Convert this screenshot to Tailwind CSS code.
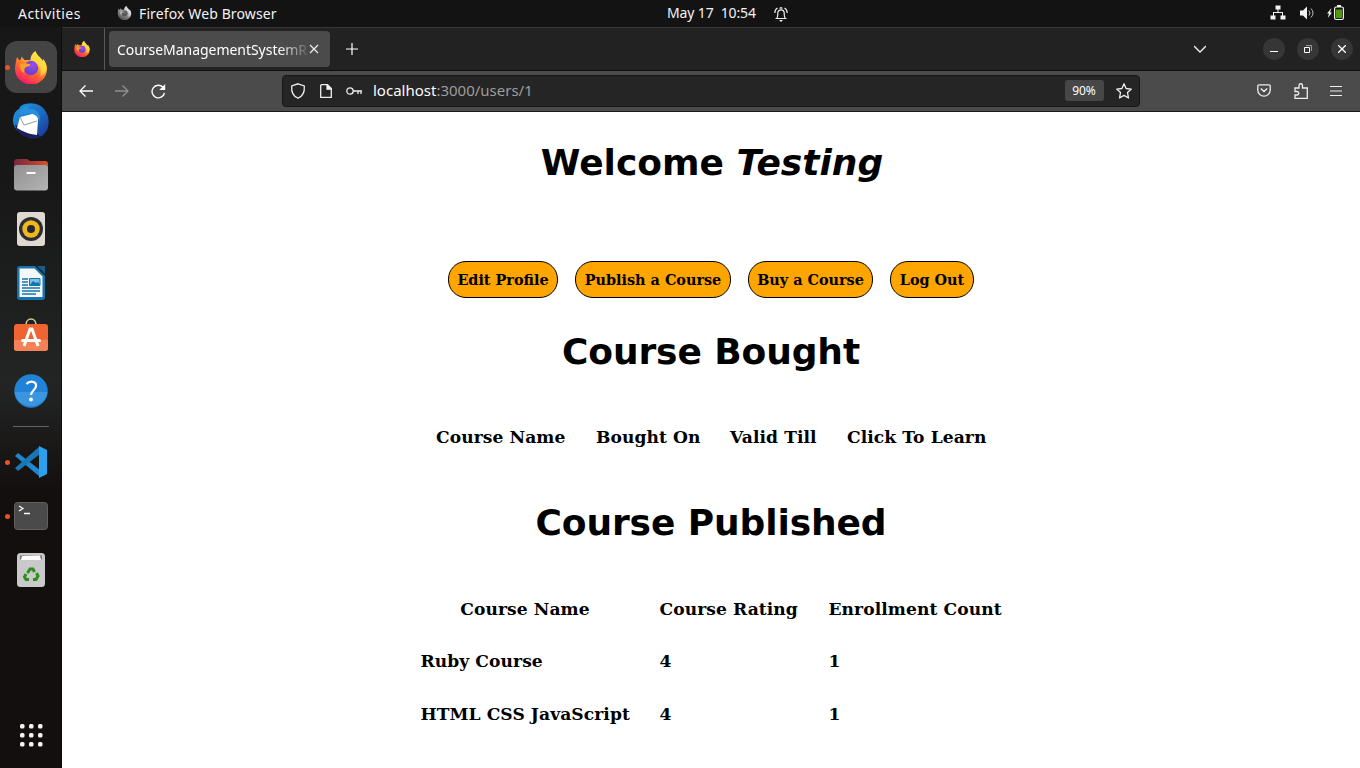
<!DOCTYPE html>
<html lang="en">
<head>
<meta charset="utf-8">
<title>CourseManagementSystem</title>
<script src="https://cdn.jsdelivr.net/npm/@tailwindcss/browser@4"></script>
</head>
<body class="w-[1360px] h-[768px] overflow-hidden bg-[#131313] text-white font-['Noto_Sans','Open_Sans',sans-serif] flex flex-col">
<svg class="absolute w-0 h-0">
  <defs>
    <linearGradient id="ff" x1="0.85" y1="0.05" x2="0.3" y2="1"><stop offset="0" stop-color="#fff44f"/><stop offset=".3" stop-color="#ffc02a"/><stop offset=".6" stop-color="#ff6a30"/><stop offset=".85" stop-color="#ff3550"/><stop offset="1" stop-color="#e8127c"/></linearGradient>
    <linearGradient id="tb" x1="0" y1="0" x2="1" y2="1"><stop offset="0" stop-color="#1f9ae0"/><stop offset=".5" stop-color="#1d6fc4"/><stop offset="1" stop-color="#1b2f8f"/></linearGradient>
    <linearGradient id="gray" x1="0" y1="0" x2="1" y2="1"><stop offset="0" stop-color="#919191"/><stop offset="1" stop-color="#b4b4b4"/></linearGradient>
    <linearGradient id="fold" x1="0" y1="0" x2="1" y2="0"><stop offset="0" stop-color="#77243f"/><stop offset="1" stop-color="#d9512b"/></linearGradient>
    <radialGradient id="pur" cx=".6" cy=".3" r=".8"><stop offset="0" stop-color="#9b4bea"/><stop offset="1" stop-color="#5a3fc8"/></radialGradient>
    <symbol id="fox" viewBox="0 0 32 33">
      <path fill="url(#ff)" d="M2 6 4.500 9.500 6 8l.5-2.500L9.500 9h6c0-4 2-7 5-9 .8 3 2.500 4.500 5 7 1 1 1.500 2 2 3.500l.5-2.500c2.500 3 4 6 4 10a16 15.500 0 0 1-32 0c0-4 1-8 2-12z"/>
      <path fill="#ffe14a" d="M20.500 0c.8 3 2.500 4.500 5 7 1 1 1.500 2 2 3.500l.5-2.500c2.500 3 4 6 3.500 10-1 4-3 6-6 7.500 1-5-.5-11-4.500-13.500-3-1-5-2-5.500-3 0-4 2-7 5-9z" opacity=".7"/>
      <circle cx="16" cy="17" r="7.200" fill="url(#pur)"/>
      <path fill="#ff9d2a" d="M4.500 14c2-2 5-2.500 11-.5-.5 2-3 2-4.500 2.500-2 1.500-2 4-1.500 6.500-3-1.500-5-5-5-8.500z"/>
    </symbol>
  </defs>
</svg>

<header class="h-[27px] w-full shrink-0 flex items-center text-[14px] leading-[26px] text-[#f2f2f2]">
  <div class="w-[117px] pl-[18px]"><span class="tracking-[0.450px]">Activities</span></div>
  <svg class="w-[15px] h-[14px] grayscale mt-[-2px]"><use href="#fox"/></svg>
  <span class="ml-[7px] w-[528px] tracking-[0.120px]">Firefox Web Browser</span>
  <span class="w-[106px] whitespace-pre tracking-[-0.120px] mt-[-2px]">May 17  10:54</span>
  <svg class="w-4 h-4" viewBox="0 0 16 16" fill="none" stroke="#eee" stroke-width="1.200"><path d="M2.500 12.500h11M4 12c.8-1.500.8-3 .8-5a3.200 3.200 0 0 1 6.400 0c0 2 0 3.500.8 5M7 2.700a1 1 0 0 1 2 0M1.800 7q0-3.500 2.700-5M14.200 7q0-3.500-2.700-5"/><path d="M6 14h4l-2 2z" fill="#eee" stroke="none"/></svg>
  <div class="flex-1"></div>
  <svg class="w-4 h-4 mt-[-1px]" viewBox="0 0 16 16" fill="#f2f2f2"><path d="M5.500.5h5v4h-5zM.5 10.500h5v4h-5zM10.500 10.500h5v4h-5zM7.500 4h1v3H13v4h-1V8H4v3H3V7h4.500z"/></svg>
  <svg class="w-4 h-4 ml-[13px] mt-[-2px]" viewBox="0 0 16 16"><path fill="#f2f2f2" d="M1 5.500h3l4-4v13l-4-4H1z"/><path fill="none" stroke="#bbb" d="M10 5.500q2 2.500 0 5M12 3.500q4 4.500 0 9"/></svg>
  <svg class="w-[17px] h-[17px] ml-3 mr-[16px] mt-[-2px]" viewBox="0 0 17 17"><path fill="#f2f2f2" d="M4.500 4 0 9.500h2L.8 14 5 8.500H3z"/><rect x="7.600" y="3" width="8.800" height="12.500" rx="1.500" fill="none" stroke="#f2f2f2" stroke-width="1.200"/><path fill="#f2f2f2" d="M10 1h4v2h-4z"/><path fill="#4e9a06" d="M9 5.500h6V14H9z"/></svg>
</header>

<div class="flex flex-1 min-h-0">
  <aside class="w-[62px] shrink-0 flex flex-col items-center bg-linear-to-b from-[#161716] from-[20%] via-[#232525] via-[48%] to-[#130f0e] to-[63%] border-r border-[#0c0c0c]">
    <div class="h-[54px] mt-[13px] w-full flex items-center">
      <i class="w-[5px] h-[5px] rounded-full bg-[#e95420] ml-[5px] mr-[-5px] z-10"></i>
      <div class="w-[52px] h-[52px] rounded-[12px] bg-[#434443] flex items-center justify-center"><svg class="w-8 h-[33px]"><use href="#fox"/></svg></div>
    </div>
    <div class="h-[54px] flex items-center"><svg class="w-9 h-9" viewBox="0 0 36 36"><path fill="url(#tb)" d="M12 1C20-1 27 1 31 6c5 6 6 14 3 21-3 6-9 9-16 8C9 33 0 26 0 18 0 12 2 8 6 6c1-3 3-4 6-5z"/><path fill="#1b1f5c" d="M2 22c2 8 8 12 18 13l8-1-5-5z"/><path fill="#fff" d="m7 14 12-3c4 0 6 2 6 6l-1 15C15 31 9 28 4 25z"/><path fill="none" stroke="#999" d="m7 14 4 8 13-4"/><path fill="#2b8fe0" d="M6 12c1-6 6-10 12-10-3 1-4 3-3 4 9-1 13 5 12 13C26 14 20 9 14 11z"/></svg></div>
    <div class="h-[54px] flex items-center"><svg class="w-[34px] h-8" viewBox="0 0 34 32"><path fill="url(#fold)" d="M0 3a3 3 0 0 1 3-3h10l3 2h15a3 3 0 0 1 3 3v8H0z"/><rect y="6" width="34" height="25.500" rx="3" fill="url(#gray)"/><path stroke="#fff" stroke-width="2" d="M12.500 14h9"/></svg></div>
    <div class="h-[54px] flex items-center"><svg class="w-7 h-[34px]" viewBox="0 0 28 34"><rect width="28" height="34" rx="3" fill="#dfdad1"/><circle cx="14" cy="17" r="12" fill="#2b2d33"/><circle cx="14" cy="17" r="8.700" fill="#eeb91b"/><circle cx="14" cy="17" r="4" fill="#26262c"/></svg></div>
    <div class="h-[54px] flex items-center"><svg class="w-7 h-[34px]" viewBox="0 0 28 34"><path fill="#1872ac" d="M3 0h15l10 10v21a3 3 0 0 1-3 3H3a3 3 0 0 1-3-3V3a3 3 0 0 1 3-3z"/><path fill="#f5f8fa" d="M2.500 2.500h15l8 8V31h-23z"/><path fill="#155c8f" d="M20 0h8v8z"/><path stroke="#1872ac" stroke-width="1.500" d="M5 13h6M5 16h6M5 19h6M5 22h18M5 25h18M5 28h14"/><path fill="#76c1e8" stroke="#1872ac" d="M12.500 12.500H23v7H12.500z"/><path fill="#1872ac" d="m13 19 3-4 3 2 2-1 2 3z"/></svg></div>
    <div class="h-[54px] flex items-center"><svg class="w-[34px] h-[34px] mt-[-4px]" viewBox="0 0 34 34"><path d="M12 7c0-8 10-8 10 0" fill="none" stroke="#d7c89c" stroke-width="1.600"/><rect y="6" width="34" height="27" rx="3" fill="#ef6430"/><path fill="#f58158" d="M0 22h34v8a3 3 0 0 1-3 3H3a3 3 0 0 1-3-3z"/><path fill="none" stroke="#fff" stroke-width="3" d="M10 28 16 11h2l6 17"/><path stroke="#fff" stroke-width="3" stroke-linecap="round" d="M8.500 22.500h17"/></svg></div>
    <div class="h-[54px] flex items-center"><svg class="w-[34px] h-[34px]" viewBox="0 0 34 34"><circle cx="17" cy="17" r="16.700" fill="#2183d8"/><path fill="#3b96e2" d="M.5 18h33a16.700 16.700 0 0 1-33 0z"/><path d="M12.500 10c3-3.500 10-3 9.500 2 0 4-5 4.500-5 9" fill="none" stroke="#fff" stroke-width="2.200"/><circle cx="17" cy="25.500" r="1.900" fill="#fff"/></svg></div>
    <div class="w-9 h-px bg-[#626463] mt-[8px] mb-[8px]"></div>
    <div class="h-[54px] w-full flex items-center">
      <i class="w-[5px] h-[5px] rounded-full bg-[#e95420] ml-[5px] mr-[5px]"></i>
      <svg class="w-8 h-8" viewBox="0 0 32 32"><path fill="#1f86cf" d="M0 10 3 7l22 17v7z"/><path fill="#1977b8" d="M0 22 3 25 25 8V0z"/><path fill="#2ba1ee" d="m24 0 8 4v24l-8 4z"/></svg>
    </div>
    <div class="h-[54px] w-full flex items-center">
      <i class="w-[5px] h-[5px] rounded-full bg-[#e95420] ml-[5px] mr-[4px]"></i>
      <svg class="w-[34px] h-7" viewBox="0 0 34 28"><rect x=".5" y=".5" width="33" height="27" rx="3" fill="#4a4a4a" stroke="#616161"/><path fill="none" stroke="#fff" stroke-width="1.300" d="m5 4 4 2.500L5 9M10 11.500h6"/></svg>
    </div>
    <div class="h-[54px] flex items-center"><svg class="w-7 h-[34px]" viewBox="0 0 28 34"><rect width="28" height="34" rx="3.500" fill="#c9c9c9"/><path fill="#777" d="M3 2.500h22v4H3z"/><path fill="#fff" d="m5 3 18-.5 1 4.500H4z"/><g fill="none" stroke="#2c8f1b" stroke-width="3"><path d="m10.500 20 2.500-4h3l1.500 3M19.500 20l1.500 3-2 3.500h-3M12 26.500H9L7.500 24l1.500-3"/></g></svg></div>
    <div class="flex-1"></div>
    <svg class="w-6 h-6 mb-[21px]" viewBox="0 0 24 24" fill="#f5f3f1"><rect x="1" y="1" width="4.500" height="4.500" rx="1.500"/><rect x="10" y="1" width="4.500" height="4.500" rx="1.500"/><rect x="19" y="1" width="4.500" height="4.500" rx="1.500"/><rect x="1" y="10" width="4.500" height="4.500" rx="1.500"/><rect x="10" y="10" width="4.500" height="4.500" rx="1.500"/><rect x="19" y="10" width="4.500" height="4.500" rx="1.500"/><rect x="1" y="19" width="4.500" height="4.500" rx="1.500"/><rect x="10" y="19" width="4.500" height="4.500" rx="1.500"/><rect x="19" y="19" width="4.500" height="4.500" rx="1.500"/></svg>
  </aside>

  <main class="flex-1 min-w-0 flex flex-col bg-white">
    <div class="h-[44px] shrink-0 bg-[#222222] border-t border-[#383838] border-b border-b-[#101010] flex items-center">
      <div class="w-[43px] h-full border-r border-[#5a5a5a] flex items-center pl-[12px]"><svg class="w-4 h-4"><use href="#fox"/></svg></div>
      <div class="ml-[4px] w-[221px] h-[36px] rounded-[4px] bg-[#4b4b4b] flex items-center pl-2">
        <span class="w-[190px] whitespace-nowrap text-[14px] tracking-[-0.040px] mask-r-from-85% mask-r-to-102%">CourseManagementSystemR</span>
        <svg class="w-[10px] h-[10px] ml-[2px]" viewBox="0 0 10 10" stroke="#eee" stroke-width="1.200"><path d="m1 1 8 8M9 1 1 9"/></svg>
      </div>
      <svg class="w-3 h-3 ml-[16px]" viewBox="0 0 12 12" fill="#fff"><path d="M5.400 0h1.200v5.400H12v1.200H6.600V12H5.400V6.600H0V5.400h5.400z"/></svg>
      <div class="flex-1"></div>
      <svg class="w-3 h-2 mr-[57px]" viewBox="0 0 12 8" fill="none" stroke="#eee" stroke-width="1.400"><path d="m0 1 6 6 6-6"/></svg>
      <div class="flex gap-3 mr-[7px]">
        <div class="w-[22px] h-[22px] rounded-full bg-[#363636] flex items-center justify-center"><svg class="w-2 h-2" viewBox="0 0 8 8"><path d="M0 6h8v1H0z" fill="#fff"/></svg></div>
        <div class="w-[22px] h-[22px] rounded-full bg-[#363636] flex items-center justify-center"><svg class="w-2 h-2" viewBox="0 0 8 8" fill="none"><path d="M.5 2.500h5v5h-5z" stroke="#fff"/><path d="M2 .5h5.500V6" stroke="#999"/></svg></div>
        <div class="w-[22px] h-[22px] rounded-full bg-[#363636] flex items-center justify-center"><svg class="w-2 h-2" viewBox="0 0 8 8" stroke="#fff" stroke-width="1.300"><path d="m0 0 8 8M8 0 0 8"/></svg></div>
      </div>
    </div>
    <div class="h-[41px] shrink-0 bg-[#4b4b4b] border-b border-[#191919] flex items-center">
      <svg class="w-[14px] h-3 ml-[17px]" viewBox="0 0 14 12" fill="none" stroke="#fff" stroke-width="1.300"><path d="M14 6H1M6.500.5 1 6l5.500 5.500"/></svg>
      <svg class="w-[14px] h-3 ml-[22px]" viewBox="0 0 14 12" fill="none" stroke="#909090" stroke-width="1.300"><path d="M0 6h13M7.500.5 13 6l-5.500 5.500"/></svg>
      <svg class="w-[15px] h-[15px] ml-[22px]" viewBox="0 0 15 15" fill="none" stroke="#fff" stroke-width="1.400"><path d="M13.500 9A6.300 6.300 0 1 1 12 3.300L13.500 5"/><path d="M14.200 0v6h-6z" fill="#fff" stroke="none"/></svg>
      <div class="ml-[116px] mt-[-1px] w-[858px] h-[32px] rounded-[4px] bg-[#252525] border border-[#171717] flex items-center">
        <svg class="w-4 h-4 ml-[7px]" viewBox="0 0 16 16" fill="none" stroke="#eee" stroke-width="1.300"><path d="M8 .8 14.300 3c.5 6-2 10.500-6.300 12.200C3.700 13.500 1.200 9 1.700 3z"/></svg>
        <svg class="w-3 h-[14px] ml-[14px]" viewBox="0 0 12 14" fill="none" stroke="#eee" stroke-width="1.300"><path d="M1.500.7h6l3.800 3.800v8.800H.7V1.500z"/><path d="M7 .7v4.500h4.500z" fill="#eee"/></svg>
        <svg class="w-4 h-2 ml-[14px]" viewBox="0 0 16 8" fill="none" stroke="#eee" stroke-width="1.300"><circle cx="4" cy="4" r="3.200"/><path d="M7 4h9M12 4v3M15 4v3"/></svg>
        <span class="ml-[11px] text-[15px] tracking-[0px] text-[#9d9d9d]"><span class="text-[#fbfbfb]">localhost</span>:3000/users/1</span>
        <div class="flex-1"></div>
        <span class="w-[39px] h-[21px] rounded-[3px] bg-[#474747] text-[12px] leading-[21px] text-center tracking-[-0.1px] pr-px">90%</span>
        <svg class="w-4 h-4 ml-[12px] mr-[7px]" viewBox="0 0 16 16" fill="none" stroke="#eee" stroke-width="1.300" stroke-linejoin="round"><path d="m8 .8 2.100 4.700 5.200.6-3.800 3.500 1 5.400L8 12.400 3.500 15l1-5.400L.7 6.100l5.200-.6z"/></svg>
      </div>
      <div class="flex-1"></div>
      <svg class="w-[14px] h-[13px] mt-[-1px]" viewBox="0 0 14 13" fill="none" stroke="#eee" stroke-width="1.300"><path d="M2 .8h10a1.200 1.200 0 0 1 1.200 1.200v4a6.200 6.200 0 0 1-12.400 0V2A1.200 1.200 0 0 1 2 .8zM3.800 4.500 7 7.500l3.200-3"/></svg>
      <svg class="w-[14px] h-4 ml-[23px]" viewBox="0 0 14 16" fill="none" stroke="#eee" stroke-width="1.300"><path d="M1 15.300V12h2a1.500 1.500 0 0 0 0-3.500H1V5h4V2.500a1.700 1.700 0 0 1 3.500 0V5h4.800v10.300z"/></svg>
      <svg class="w-3 h-[10px] ml-[22px] mr-[18px] mt-[-1px]" viewBox="0 0 12 10" fill="#eee"><path d="M0 0h12v1.100H0zM0 4.500h12v1.100H0zM0 8.900h12V10H0z"/></svg>
    </div>

    <div class="flex-1 flex flex-col items-center text-black font-bold font-['DejaVu_Serif',serif] text-[17.100px] tracking-[0.080px] leading-[20px]">
      <h1 class="mt-[30px] h-[42px] leading-[42px] text-[36px] pl-[2px] font-['DejaVu_Sans',sans-serif] tracking-normal">Welcome <i>Testing</i></h1>
      <nav class="mt-[77px] flex gap-[17px] text-[14.400px] tracking-normal">
        <a class="w-[110px] h-[37px] rounded-[18px] border border-black bg-[#ffa500] flex items-center justify-center">Edit Profile</a>
        <a class="w-[156px] h-[37px] rounded-[18px] border border-black bg-[#ffa500] flex items-center justify-center">Publish a Course</a>
        <a class="w-[125px] h-[37px] rounded-[18px] border border-black bg-[#ffa500] flex items-center justify-center">Buy a Course</a>
        <a class="w-[84px] h-[37px] rounded-[18px] border border-black bg-[#ffa500] flex items-center justify-center">Log Out</a>
      </nav>
      <h1 class="mt-[33px] h-[42px] leading-[42px] text-[36px] font-['DejaVu_Sans',sans-serif] tracking-[-0.100px]">Course Bought</h1>
      <div class="mt-[54px] flex gap-[30px] whitespace-nowrap">
        <span class="w-[130px]">Course Name</span><span class="w-[104px]">Bought On</span><span class="w-[87px]">Valid Till</span><span class="w-[139px]">Click To Learn</span>
      </div>
      <h1 class="mt-[55px] h-[42px] leading-[42px] text-[36px] font-['DejaVu_Sans',sans-serif] tracking-[-0.100px]">Course Published</h1>
      <div class="mt-[55px] grid grid-cols-[209px_139px_173px] grid-rows-[20px_20px_20px] gap-x-[30px] gap-y-[32.500px] whitespace-nowrap">
        <span class="text-center">Course Name</span><span>Course Rating</span><span>Enrollment Count</span>
        <span class="mt-[-1px]">Ruby Course</span><span class="mt-[-1px]">4</span><span class="mt-[-1px]">1</span>
        <span>HTML CSS JavaScript</span><span>4</span><span>1</span>
      </div>
    </div>
  </main>
</div>
</body>
</html>
